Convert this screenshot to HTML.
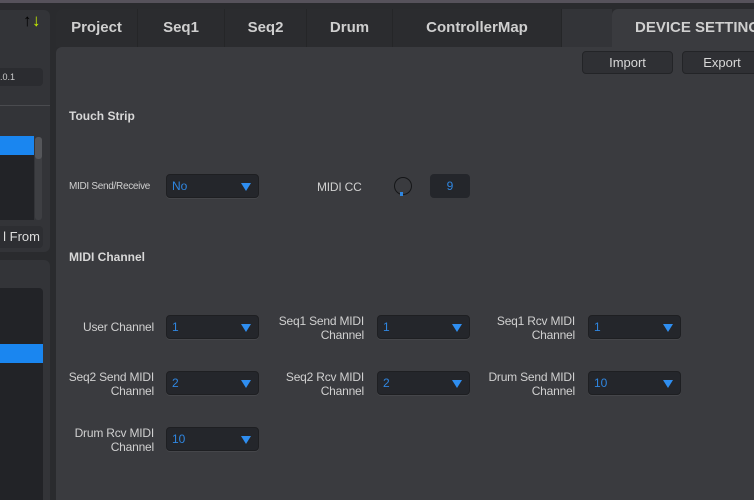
<!DOCTYPE html>
<html><head><style>
*{margin:0;padding:0;box-sizing:border-box}
body{width:754px;height:500px;background:#2a2b2e;position:relative;overflow:hidden;font-family:"Liberation Sans",sans-serif;color:#d0d0d0}
.a{position:absolute}
.tab{position:absolute;top:9px;height:38px;background:#2b2c2f;color:#cfcfcf;font-size:15px;font-weight:bold;text-align:center;line-height:38px;border-right:1px solid #252628}
.dd{position:absolute;width:93px;height:24px;background:#24262b;border:1px solid #1e1f22;border-radius:4px;color:#2f86e0;font-size:12px;line-height:22px;padding-left:5px;box-shadow:0 1px 0 #45464a}
.dd:after{content:"";position:absolute;right:7px;top:8px;border-left:5px solid transparent;border-right:5px solid transparent;border-top:8px solid #2f8ef0}
.lbl{position:absolute;font-size:12px;color:#d0d0d0;text-align:right;line-height:14px;letter-spacing:-0.2px}
.btn{position:absolute;height:23px;background:#2f3034;border:1px solid #232427;border-radius:4px;color:#d8d8d8;font-size:13px;text-align:center;line-height:21px}
</style></head><body>
<div class="a" style="left:0;top:0;width:754px;height:3px;background:#56525b"></div>
<div class="a" style="left:0;top:10px;width:50px;height:242px;background:#333438;border-radius:0 6px 6px 0"></div>
<div class="a" style="left:23px;top:11px;font-size:17px;font-weight:bold;color:#000">↑</div>
<div class="a" style="left:32px;top:11px;font-size:17px;font-weight:bold;color:#c8f000">↓</div>
<div class="a" style="left:0;top:68px;width:43px;height:18px;background:#2b2c30;border-radius:0 4px 4px 0;font-size:9px;line-height:18px;color:#ccc">.0.1</div>
<div class="a" style="left:0;top:105px;width:50px;height:1px;background:#4a4b4f"></div>
<div class="a" style="left:0;top:136px;width:34px;height:84px;background:#222327"></div>
<div class="a" style="left:0;top:136px;width:34px;height:19px;background:#1a86f0"></div>
<div class="a" style="left:35px;top:137px;width:7px;height:83px;background:#3e3f43;border-radius:3px"></div>
<div class="a" style="left:35px;top:137px;width:7px;height:22px;background:#55565a;border-radius:3px"></div>
<div class="a" style="left:0;top:226px;width:43px;height:22px;background:#2d2e32;border-radius:0 4px 4px 0;font-size:13px;line-height:22px;color:#ddd;white-space:nowrap;overflow:hidden;text-align:right;padding-right:3px">l From</div>
<div class="a" style="left:0;top:260px;width:50px;height:240px;background:#333438;border-radius:0 6px 0 0"></div>
<div class="a" style="left:0;top:288px;width:43px;height:212px;background:#222327;border-radius:0 4px 0 0"></div>
<div class="a" style="left:0;top:344px;width:43px;height:19px;background:#1a86f0"></div>
<div class="tab" style="left:56px;width:82px;border-radius:6px 0 0 0">Project</div>
<div class="tab" style="left:138px;width:87px">Seq1</div>
<div class="tab" style="left:225px;width:82px">Seq2</div>
<div class="tab" style="left:307px;width:86px">Drum</div>
<div class="tab" style="left:393px;width:169px">ControllerMap</div>
<div class="a" style="left:562px;top:9px;width:50px;height:38px;background:#333438"></div>
<div class="tab" style="left:612px;width:142px;background:#3a3b3f;border-radius:6px 0 0 0;border:none;text-align:left;padding-left:23px;white-space:nowrap">DEVICE SETTINGS</div>
<div class="a" style="left:56px;top:47px;width:698px;height:453px;background:#3a3b3f;border-radius:6px 0 0 0"></div>
<div class="btn" style="left:582px;top:51px;width:91px">Import</div>
<div class="btn" style="left:682px;top:51px;width:80px">Export</div>
<div class="a" style="left:69px;top:109px;font-size:12px;font-weight:bold;color:#d8d8d8">Touch Strip</div>
<div class="lbl" style="left:69px;top:180px;font-size:10px;letter-spacing:-0.3px">MIDI Send/Receive</div>
<div class="dd" style="left:166px;top:174px">No</div>
<div class="lbl" style="left:317px;top:180px">MIDI CC</div>
<div class="a" style="left:394px;top:177px;width:18px;height:18px;border:1.5px solid #151618;border-radius:50%;background:#3a3b3f"></div>
<div class="a" style="left:400px;top:192px;width:3px;height:4px;background:#2f86e0"></div>
<div class="a" style="left:430px;top:174px;width:40px;height:24px;background:#24262b;border-radius:4px;color:#2f86e0;font-size:12px;text-align:center;line-height:24px">9</div>
<div class="a" style="left:69px;top:250px;font-size:12px;font-weight:bold;color:#d8d8d8">MIDI Channel</div>

<div class="lbl" style="left:60px;width:94px;top:320px">User Channel</div>
<div class="dd" style="left:166px;top:315px">1</div>
<div class="lbl" style="left:260px;width:104px;top:314px">Seq1 Send MIDI<br>Channel</div>
<div class="dd" style="left:377px;top:315px">1</div>
<div class="lbl" style="left:470px;width:105px;top:314px">Seq1 Rcv MIDI<br>Channel</div>
<div class="dd" style="left:588px;top:315px">1</div>

<div class="lbl" style="left:60px;width:94px;top:370px">Seq2 Send MIDI<br>Channel</div>
<div class="dd" style="left:166px;top:371px">2</div>
<div class="lbl" style="left:260px;width:104px;top:370px">Seq2 Rcv MIDI<br>Channel</div>
<div class="dd" style="left:377px;top:371px">2</div>
<div class="lbl" style="left:470px;width:105px;top:370px">Drum Send MIDI<br>Channel</div>
<div class="dd" style="left:588px;top:371px">10</div>

<div class="lbl" style="left:60px;width:94px;top:426px">Drum Rcv MIDI<br>Channel</div>
<div class="dd" style="left:166px;top:427px">10</div>
</body></html>
